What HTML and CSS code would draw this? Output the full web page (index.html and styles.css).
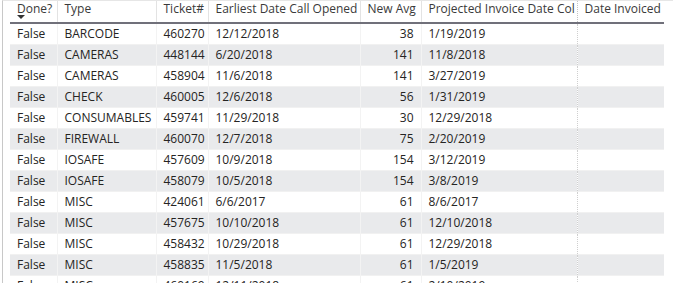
FILE: index.html
```html
<!DOCTYPE html>
<html>
<head>
<meta charset="utf-8">
<link rel="stylesheet" href="styles.css">
</head>
<body>
<div class="frame">
  <table class="grid">
    <colgroup>
      <col class="c-done"><col class="c-type"><col class="c-ticket"><col class="c-date"><col class="c-avg"><col class="c-proj"><col class="c-inv">
    </colgroup>
    <thead>
      <tr>
        <th><span class="hd">Done?</span><span class="sort"></span></th>
        <th>Type</th>
        <th>Ticket#</th>
        <th>Earliest Date Call Opened</th>
        <th>New Avg</th>
        <th>Projected Invoice Date Col</th>
        <th class="inv">Date Invoiced</th>
      </tr>
    </thead>
    <tbody>
      <tr><td>False</td><td>BARCODE</td><td class="num">460270</td><td>12/12/2018</td><td class="num">38</td><td>1/19/2019</td><td class="inv"></td></tr>
      <tr><td>False</td><td>CAMERAS</td><td class="num">448144</td><td>6/20/2018</td><td class="num">141</td><td>11/8/2018</td><td class="inv"></td></tr>
      <tr><td>False</td><td>CAMERAS</td><td class="num">458904</td><td>11/6/2018</td><td class="num">141</td><td>3/27/2019</td><td class="inv"></td></tr>
      <tr><td>False</td><td>CHECK</td><td class="num">460005</td><td>12/6/2018</td><td class="num">56</td><td>1/31/2019</td><td class="inv"></td></tr>
      <tr><td>False</td><td>CONSUMABLES</td><td class="num">459741</td><td>11/29/2018</td><td class="num">30</td><td>12/29/2018</td><td class="inv"></td></tr>
      <tr><td>False</td><td>FIREWALL</td><td class="num">460070</td><td>12/7/2018</td><td class="num">75</td><td>2/20/2019</td><td class="inv"></td></tr>
      <tr><td>False</td><td>IOSAFE</td><td class="num">457609</td><td>10/9/2018</td><td class="num">154</td><td>3/12/2019</td><td class="inv"></td></tr>
      <tr><td>False</td><td>IOSAFE</td><td class="num">458079</td><td>10/5/2018</td><td class="num">154</td><td>3/8/2019</td><td class="inv"></td></tr>
      <tr><td>False</td><td>MISC</td><td class="num">424061</td><td>6/6/2017</td><td class="num">61</td><td>8/6/2017</td><td class="inv"></td></tr>
      <tr><td>False</td><td>MISC</td><td class="num">457675</td><td>10/10/2018</td><td class="num">61</td><td>12/10/2018</td><td class="inv"></td></tr>
      <tr><td>False</td><td>MISC</td><td class="num">458432</td><td>10/29/2018</td><td class="num">61</td><td>12/29/2018</td><td class="inv"></td></tr>
      <tr><td>False</td><td>MISC</td><td class="num">458835</td><td>11/5/2018</td><td class="num">61</td><td>1/5/2019</td><td class="inv"></td></tr>
      <tr><td>False</td><td>MISC</td><td class="num">460169</td><td>12/11/2018</td><td class="num">61</td><td>2/10/2019</td><td class="inv"></td></tr>
    </tbody>
  </table>
</div>
</body>
</html>
```
FILE: styles.css
```css
html, body {
  margin: 0;
  padding: 0;
  background: #ffffff;
  overflow: hidden;
}
.frame {
  margin-left: 2px;
  height: 283px;
  border-left: 1px solid #c8c8c8;
  border-top: 1px solid #e6e6e6;
  box-sizing: border-box;
  padding-left: 7px;
  overflow: hidden;
}
.grid {
  border-collapse: collapse;
  table-layout: fixed;
  width: 654px;
  font-family: "Open Sans", "Noto Sans", sans-serif;
  font-size: 12px;
  color: #252423;
}
.c-done { width: 47px; }
.c-type { width: 99px; }
.c-ticket { width: 52px; }
.c-date { width: 152px; }
.c-avg { width: 61px; }
.c-proj { width: 156px; }
.c-inv { width: 87px; }

.grid th {
  height: 21px;
  padding: 0 0 0 7px;
  text-align: left;
  vertical-align: top;
  font-weight: normal;
  color: #3a3a3a;
  line-height: 15px;
  white-space: nowrap;
  overflow: hidden;
  border-left: 1px solid #e3e3e3;
  border-bottom: 2px solid #70707a;
  position: relative;
}
.grid th:first-child { border-left: none; }
.grid th.inv { border-left: 1px dotted #c4c4c4; }
.hd { display: block; }
.sort {
  position: absolute;
  left: 7px;
  top: 14px;
  width: 0;
  height: 0;
  border-left: 4px solid transparent;
  border-right: 4px solid transparent;
  border-top: 4px solid #333333;
}
.grid td {
  height: 20.8px;
  padding: 0 7px;
  line-height: 20px;
  white-space: nowrap;
  overflow: hidden;
  border-left: 1px solid #f3f3f3;
  border-top: 1px solid #f1f1f1;
  box-sizing: border-box;
}
.grid td:first-child { border-left: none; }
.grid td.inv { border-left: 1px dotted #cfcfcf; }
.grid td.num { text-align: right; }
.grid tbody tr:nth-child(even) td { background: #e9eaec; }
```
